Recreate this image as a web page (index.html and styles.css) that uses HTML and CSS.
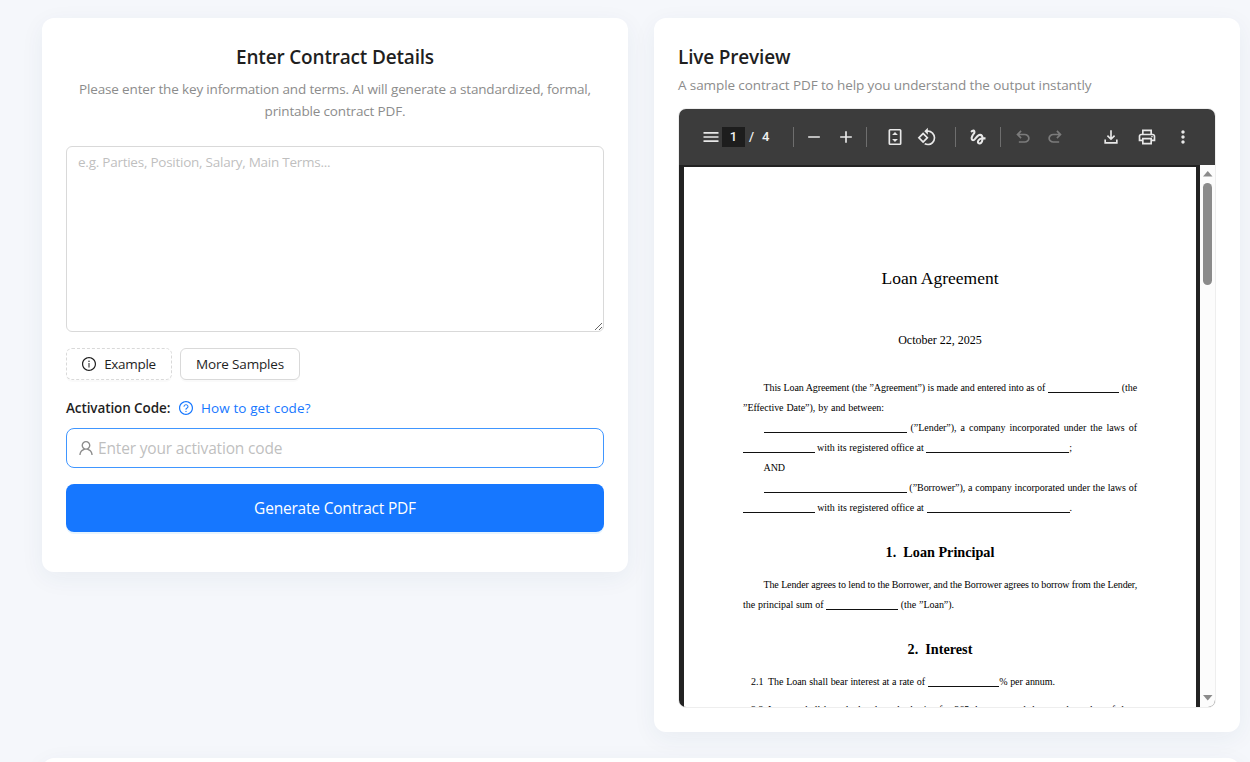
FILE: index.html
```html
<!DOCTYPE html>
<html lang="en">
<head>
<meta charset="utf-8">
<title>Contract PDF Generator</title>
<link rel="stylesheet" href="styles.css">
</head>
<body>
<main class="grid">
  <section class="card form-card">
    <h2 class="title"><span class="t-enter">Enter Contract Details</span></h2>
    <p class="desc"><span class="d1">Please enter the key information and terms. AI will generate a standardized, formal,</span><br><span class="d2">printable contract PDF.</span></p>
    <textarea class="details" placeholder="e.g. Parties, Position, Salary, Main Terms..."></textarea>
    <div class="buttons">
      <button class="btn dashed">
        <svg class="ico" viewBox="64 64 896 896"><path d="M512 64C264.600 64 64 264.600 64 512s200.600 448 448 448 448-200.600 448-448S759.400 64 512 64zm0 820c-205.400 0-372-166.600-372-372s166.600-372 372-372 372 166.600 372 372-166.600 372-372 372z"/><path d="M464 336a48 48 0 1096 0 48 48 0 10-96 0zm72 112h-48c-4.400 0-8 3.600-8 8v272c0 4.400 3.600 8 8 8h48c4.400 0 8-3.600 8-8V456c0-4.400-3.600-8-8-8z"/></svg>
        <span>Example</span>
      </button>
      <button class="btn"><span class="more">More Samples</span></button>
    </div>
    <div class="label-row">
      <span class="label">Activation Code:</span>
      <a class="help">
        <svg class="ico" viewBox="64 64 896 896"><path d="M512 64C264.600 64 64 264.600 64 512s200.600 448 448 448 448-200.600 448-448S759.400 64 512 64zm0 820c-205.400 0-372-166.600-372-372s166.600-372 372-372 372 166.600 372 372-166.600 372-372 372z"/><path d="M623.600 316.700C593.600 290.400 554 276 512 276s-81.600 14.500-111.600 40.700C369.200 344 352 380.700 352 420v7.600c0 4.400 3.600 8 8 8h48c4.400 0 8-3.600 8-8V420c0-44.100 43.100-80 96-80s96 35.900 96 80c0 31.100-22 59.600-56.100 72.700-21.200 8.100-39.200 22.300-52.100 40.900-13.100 19-19.900 41.800-19.900 64.900V620c0 4.400 3.600 8 8 8h48c4.400 0 8-3.600 8-8v-22.700a48.300 48.300 0 0130.900-44.800c59-22.700 97.100-74.700 97.100-132.500.1-39.300-17.100-76-48.300-103.300zM472 732a40 40 0 1080 0 40 40 0 10-80 0z"/></svg>
        <span>How to get code?</span>
      </a>
    </div>
    <div class="code-input">
      <svg class="user" viewBox="64 64 896 896"><path d="M858.500 763.600a374 374 0 00-80.600-119.500 375.630 375.630 0 00-119.500-80.600c-.4-.2-.8-.3-1.200-.5C719.500 518 760 444.700 760 362c0-137-111-248-248-248S264 225 264 362c0 82.700 40.500 156 102.800 201.100-.4.2-.8.3-1.200.5-44.800 18.900-85 46-119.500 80.600a375.630 375.630 0 00-80.600 119.500A371.700 371.700 0 00136 901.800a8 8 0 008 8.200h60c4.400 0 7.900-3.500 8-7.800 2-77.200 33-149.500 87.800-204.300 56.700-56.700 132-87.900 212.200-87.900s155.500 31.200 212.200 87.900C779 752.700 810 825 812 902.200c.1 4.400 3.600 7.800 8 7.800h60a8 8 0 008-8.200c-1-47.800-10.900-94.300-29.500-138.200zM512 534c-45.900 0-89.100-17.900-121.600-50.400S340 407.900 340 362c0-45.900 17.900-89.100 50.400-121.600S466.100 190 512 190s89.100 17.900 121.600 50.400S684 316.100 684 362c0 45.900-17.900 89.100-50.400 121.600S557.900 534 512 534z"/></svg>
      <input type="text" placeholder="Enter your activation code">
    </div>
    <button class="primary">Generate Contract PDF</button>
  </section>

  <section class="card preview-card">
    <h2 class="title left"><span class="t-live">Live Preview</span></h2>
    <p class="desc left"><span class="d3">A sample contract PDF to help you understand the output instantly</span></p>
    <div class="viewer">
      <div class="toolbar">
        <svg class="ti menu" viewBox="0 0 24 24"><path d="M3 18h18v-2H3v2zm0-5h18v-2H3v2zm0-7v2h18V6H3z"/></svg>
        <span class="page-no">1</span><span class="slash">/</span><span class="total">4</span>
        <i class="sep s1"></i>
        <svg class="ti minus" viewBox="0 0 24 24"><path d="M19 13H5v-2h14z"/></svg>
        <svg class="ti plus" viewBox="0 0 24 24"><path d="M19 13h-6v6h-2v-6H5v-2h6V5h2v6h6z"/></svg>
        <i class="sep s2"></i>
        <svg class="ti fit" viewBox="0 0 24 24"><path fill-rule="evenodd" d="M6.200 2.300h11.600a2 2 0 012 2v15.400a2 2 0 01-2 2H6.200a2 2 0 01-2-2V4.300a2 2 0 012-2zm0 2v15.400h11.600V4.300zM12 6l3.500 3.500h-7zM12 18l3.500-3.500h-7z"/></svg>
        <svg class="ti rotate" viewBox="0 0 24 24"><path d="M7.340 6.410L.86 12.900l6.490 6.480 6.490-6.480-6.500-6.490zM3.690 12.900l3.660-3.660L11 12.900l-3.660 3.660-3.650-3.660zm15.670-6.260A8.950 8.950 0 0013 4V.760L8.760 5 13 9.240V6c1.790 0 3.580.68 4.950 2.050a7.007 7.007 0 010 9.900 6.973 6.973 0 01-7.920 1.370l-1.490 1.490C9.930 21.600 11.470 22 13 22c2.300 0 4.610-.88 6.360-2.640a8.980 8.980 0 000-12.720z"/></svg>
        <i class="sep s3"></i>
        <svg class="ti ink" viewBox="0 0 24 24"><path d="M4.590 6.890c.7-.71 1.400-1.350 1.710-1.220.5.2 0 1.030-.3 1.520-.25.42-2.860 3.890-2.860 6.310 0 1.280.48 2.340 1.340 2.980.75.56 1.740.73 2.640.46 1.070-.31 1.950-1.400 3.060-2.770 1.210-1.490 2.830-3.440 4.080-3.440 1.630 0 1.650 1.010 1.760 1.790-3.780.64-5.380 3.670-5.380 5.370 0 1.700 1.440 3.090 3.210 3.090 1.630 0 4.290-1.330 4.690-6.100H21v-2.500h-2.470c-.15-1.650-1.090-4.200-4.030-4.200-2.250 0-4.180 1.910-4.940 2.840-.58.73-2.060 2.480-2.290 2.720-.25.3-.68.84-1.110.84-.45 0-.72-.83-.36-1.920.35-1.090 1.400-2.860 1.850-3.520.78-1.140 1.300-1.920 1.300-3.280C8.950 3.690 7.310 3 6.440 3 5.120 3 3.970 4 3.720 4.250c-.36.36-.66.66-.88.93l1.750 1.710zm9.290 11.660c-.31 0-.74-.26-.74-.72 0-.6.73-2.200 2.870-2.760-.3 2.690-1.430 3.480-2.130 3.480z"/></svg>
        <i class="sep s4"></i>
        <svg class="ti off undo" viewBox="0 0 24 24"><path d="M7 19v-2h7.100c1.050 0 1.960-.33 2.730-1 .78-.67 1.170-1.500 1.170-2.500s-.39-1.830-1.170-2.500c-.77-.67-1.680-1-2.730-1H7.800l2.600 2.600L9 14 4 9l5-5 1.400 1.400L7.800 8h6.300c1.620 0 3.010.53 4.170 1.580C19.420 10.630 20 11.930 20 13.500c0 1.570-.58 2.870-1.730 3.920C17.110 18.480 15.720 19 14.100 19H7z"/></svg>
        <svg class="ti off redo" viewBox="0 0 24 24"><path transform="matrix(-1 0 0 1 24 0)" d="M7 19v-2h7.100c1.050 0 1.960-.33 2.730-1 .78-.67 1.170-1.500 1.170-2.500s-.39-1.830-1.170-2.500c-.77-.67-1.680-1-2.730-1H7.800l2.600 2.600L9 14 4 9l5-5 1.400 1.400L7.800 8h6.300c1.620 0 3.010.53 4.170 1.580C19.420 10.630 20 11.930 20 13.500c0 1.570-.58 2.870-1.730 3.920C17.110 18.480 15.720 19 14.100 19H7z"/></svg>
        <span class="grow"></span>
        <svg class="ti download" viewBox="0 0 24 24"><path d="M12 16l-5-5 1.400-1.450 2.600 2.600V4h2v8.150l2.600-2.600L17 11zM4 20v-5h2v3h12v-3h2v5z"/></svg>
        <svg class="ti print" viewBox="0 0 24 24"><path d="M19 8h-1V3H6v5H5c-1.660 0-3 1.340-3 3v6h4v4h12v-4h4v-6c0-1.660-1.340-3-3-3zM8 5h8v3H8V5zm8 12v2H8v-4h8v2zm2-2v-2H6v2H4v-4c0-.55.45-1 1-1h14c.55 0 1 .45 1 1v4h-2z"/><circle cx="18" cy="11.500" r="1"/></svg>
        <svg class="ti dots" viewBox="0 0 24 24"><path d="M12 8c1.100 0 2-.9 2-2s-.9-2-2-2-2 .9-2 2 .9 2 2 2zm0 2c-1.100 0-2 .9-2 2s.9 2 2 2 2-.9 2-2-.9-2-2-2zm0 6c-1.100 0-2 .9-2 2s.9 2 2 2 2-.9 2-2-.9-2-2-2z"/></svg>
      </div>
      <div class="stage">
        <article class="paper">
          <h1>Loan Agreement</h1>
          <p class="date">October 22, 2025</p>
          <p class="ln in tight">This Loan Agreement (the ”Agreement”) is made and entered into as of <i class="bl s"></i> (the</p>
          <p class="ln w141">”Effective Date”), by and between:</p>
          <p class="ln in"><i class="bl l"></i> (”Lender”), a company incorporated under the laws of</p>
          <p class="ln w329"><i class="bl s"></i> with its registered office at <i class="bl l"></i>;</p>
          <p class="ln in and">AND</p>
          <p class="ln in"><i class="bl l"></i> (”Borrower”), a company incorporated under the laws of</p>
          <p class="ln w329"><i class="bl s"></i> with its registered office at <i class="bl l"></i>.</p>
          <h3 class="h-one">1. &nbsp;Loan Principal</h3>
          <p class="ln in tighter">The Lender agrees to lend to the Borrower, and the Borrower agrees to borrow from the Lender,</p>
          <p class="ln w211">the principal sum of <i class="bl s"></i> (the ”Loan”).</p>
          <h3 class="h-two">2. &nbsp;Interest</h3>
          <p class="ln item"><span>2.1</span><span class="it-a">The Loan shall bear interest at a rate of <i class="bl s"></i>% per annum.</span></p>
          <p class="ln item second"><span>2.2</span><span class="it-b">Interest shall be calculated on the basis of a 365-day year and the actual number of days</span></p>
        </article>
        <div class="scroll">
          <svg viewBox="0 0 15 18"><path d="M3 11.500h9.500L7.750 6z"/></svg>
          <span class="thumb"></span>
          <svg class="down" viewBox="0 0 15 18"><path d="M3 6h9.500L7.750 11.500z"/></svg>
        </div>
      </div>
    </div>
  </section>
  <section class="card next-card"></section>
</main>
</body>
</html>
```

FILE: styles.css
```css
* { box-sizing: border-box; }
html, body { height: 762px; overflow: hidden; }
body {
  margin: 0;
  background: #f5f7fb;
  color: #1f1f1f;
  font: 14px/22px "Open Sans", "Noto Sans", sans-serif;
}
h1, h2, h3, p { margin: 0; font-weight: 400; }
button, input, textarea { font-family: inherit; }
.grid {
  display: grid;
  grid-template-columns: 586px 586px;
  gap: 26px;
  align-items: start;
  height: 762px;
  padding: 18px 10px 0 42px;
  overflow: hidden;
}
.card {
  background: #fff;
  border-radius: 12px;
  box-shadow: 0 6px 24px rgba(30, 60, 100, .06);
  padding: 24px;
}
.form-card { height: 554px; }
.preview-card { height: 714px; }
.next-card { grid-column: 1 / -1; height: 48px; }
.title {
  height: 28px;
  margin-top: 1px;
  text-align: center;
  font-size: 19px;
  line-height: 28px;
  font-weight: 600;
  white-space: nowrap;
}
.t-enter { letter-spacing: -.18px; }
.t-live { letter-spacing: -.18px; }
.desc { margin-top: 7px; text-align: center; color: #8c8c8c; white-space: nowrap; font-size: 13.5px; }
.d1 { letter-spacing: -.155px; }
.d2 { letter-spacing: -.16px; }
.d3 { letter-spacing: -.1px; }
.left { text-align: left; }
.desc.left { margin-top: 3px; }
.details {
  display: block;
  width: 538px;
  height: 186px;
  margin-top: 24px;
  padding: 4px 11px;
  border: 1px solid #d9d9d9;
  border-radius: 6px;
  outline: 0;
  resize: vertical;
  font-size: 13.5px;
  line-height: 22px;
  letter-spacing: -.25px;
}
::placeholder { color: #bfbfbf; opacity: 1; }
.buttons { display: flex; gap: 8px; margin-top: 16px; }
.btn {
  display: flex;
  align-items: center;
  justify-content: center;
  gap: 8px;
  width: 120px;
  height: 32px;
  padding: 0;
  border: 1px solid #d9d9d9;
  border-radius: 6px;
  background: #fff;
  box-shadow: 0 2px 0 rgba(0, 0, 0, .02);
  color: #1f1f1f;
  font-size: 13.5px;
  letter-spacing: -.15px;
  white-space: nowrap;
}
.btn.dashed { width: 106px; border-style: dashed; letter-spacing: -.3px; }
.ico { width: 14px; height: 14px; fill: currentColor; flex: none; }
.label-row { display: flex; gap: 8px; margin-top: 17px; height: 22px; font-size: 13.5px; white-space: nowrap; }
.label { width: 105px; font-weight: 600; letter-spacing: -.1px; }
.help { display: flex; align-items: center; gap: 8px; color: #1677ff; letter-spacing: .1px; }
.code-input {
  display: flex;
  align-items: center;
  gap: 4px;
  height: 40px;
  margin-top: 9px;
  padding: 0 11px;
  border: 1px solid #4096ff;
  border-radius: 8px;
}
.user { width: 16px; height: 16px; fill: #8c8c8c; }
.code-input input { flex: 1; border: 0; outline: 0; padding: 0; height: 24px; font-size: 15.5px; letter-spacing: -.17px; }
.primary {
  display: block;
  width: 100%;
  height: 48px;
  margin-top: 16px;
  border: 0;
  border-radius: 8px;
  background: #1677ff;
  box-shadow: 0 2px 0 rgba(5, 145, 255, .1);
  color: #fff;
  font-size: 15.5px;
  letter-spacing: -.2px;
}
.viewer {
  width: 538px;
  height: 600px;
  margin-top: 12px;
  border: 1px solid #eee;
  border-radius: 8px;
  overflow: hidden;
}
.toolbar {
  display: flex;
  align-items: center;
  height: 56px;
  padding: 0 22px;
  background: #3c3c3c;
  color: #f1f1f1;
  font: 500 13px/20px Roboto, "Open Sans", sans-serif;
}
.ti { width: 20px; height: 20px; fill: #e8e8e8; flex: none; }
.ti.off { fill: #7b7b7b; }
.page-no { width: 23px; height: 20px; margin-left: 1px; background: #1d1d1d; text-align: center; }
.slash { margin-left: 4px; }
.total { margin-left: 8px; }
.sep { width: 1px; height: 20px; background: #6e6e6e; flex: none; }
.s1 { margin-left: auto; }
.minus { margin-left: 10px; }
.plus { margin-left: 12px; }
.s2 { margin-left: 10px; }
.fit { margin-left: 18px; }
.rotate { margin-left: 12px; }
.s3 { margin-left: 18px; }
.ink { margin-left: 12px; }
.s4 { margin-left: 12px; }
.undo { margin-left: 12px; }
.redo { margin-left: 12px; }
.grow { width: 36px; flex: none; }
.print { margin-left: 16px; }
.dots { margin-left: 16px; }
.stage { display: flex; height: 542px; padding: 2px 0 0 5px; background: #222; }
.paper {
  width: 512px;
  height: 540px;
  padding: 0 59px;
  overflow: hidden;
  background: #fff;
  color: #000;
  font: 10px/20px "Liberation Serif", serif;
  white-space: nowrap;
}
.paper h1 { margin-top: 97px; text-align: center; font-size: 17.5px; line-height: 28px; }
.date { margin-top: 38px; text-align: center; font-size: 12px; line-height: 20px; }
.date + .ln { margin-top: 28px; }
.ln { height: 20px; width: 394px; text-align: justify; text-align-last: justify; letter-spacing: -.04px; }
.in { padding-left: 20.500px; }
.tight { letter-spacing: -.1px; }
.tighter { letter-spacing: -.135px; }
.and { text-align-last: left; }
.w141 { width: 141px; }
.w329 { width: 329px; }
.w211 { width: 211px; }
.bl { display: inline-block; height: 1px; background: #111; vertical-align: -2px; }
.bl.s { width: 71.500px; }
.bl.l { width: 143px; }
.paper h3 { text-align: center; font-size: 14.200px; line-height: 20px; font-weight: 700; }
.h-one { margin: 24px 0 13px; }
.h-two { margin: 24px 0 13px; }
.item { display: flex; padding-left: 8px; }
.item > span:first-child { width: 17px; text-align-last: left; }
.it-a { width: 287px; }
.it-b { width: 369px; }
.second { margin-top: 8px; }
.scroll {
  display: flex;
  flex-direction: column;
  width: 15px;
  height: 542px;
  margin: -2px 0 0 4px;
  background: #fcfcfc;
}
.scroll svg { width: 15px; height: 18px; fill: #8b8b8b; }
.thumb { width: 9px; height: 102px; margin-left: 3px; border-radius: 5px; background: #8b8b8b; }
.scroll .down { margin-top: auto; }
```
